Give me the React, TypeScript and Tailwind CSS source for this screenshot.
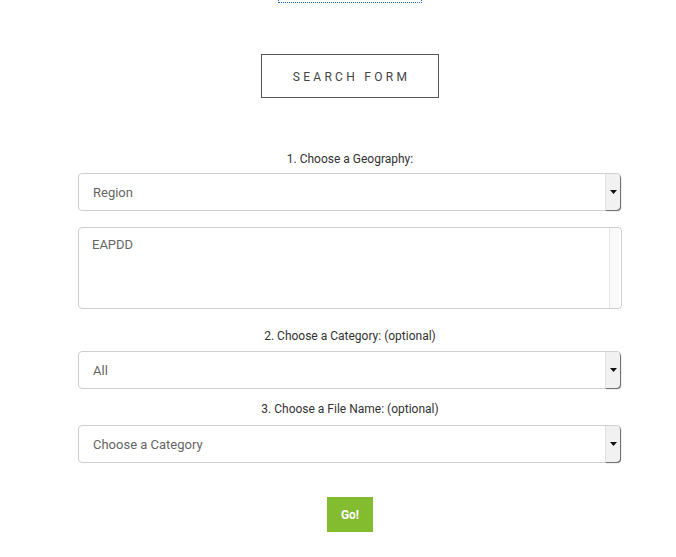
import React from 'react';

const Arrow = () => (
  <div className="absolute right-0 top-0 bottom-0 w-[15px] bg-[#f1f1f1] border-l border-[#e2e2e2] rounded-r-[4px] shadow-[1px_1px_1px_#666] flex items-center justify-center">
    <svg width="7" height="4" viewBox="0 0 7 4">
      <path d="M0 0h7L3.5 4z" fill="#111" />
    </svg>
  </div>
);

const Select = ({ value }: { value: string }) => (
  <div className="relative h-[38px] w-[543px] rounded-[4px] border border-[#cfcfcf] bg-white flex items-center pl-[14px] pt-[2px] text-[13px] text-[#666]">
    {value}
    <Arrow />
  </div>
);

const Label = ({ children }: { children: React.ReactNode }) => (
  <div className="text-center text-[12px] text-[#333] leading-[16px]">{children}</div>
);

export default function App() {
  return (
    <div className="min-h-[557px] bg-white font-['Roboto',sans-serif]">
      <div className="ml-[78px] w-[544px] flex flex-col items-center">
        <div className="w-[144px] h-[3px] border-x border-b border-dotted border-[#1f6fb5] rounded-b-[1px]" />
        <div className="mt-[51px] w-[178px] h-[44px] border border-[#555] flex items-center justify-center pt-[2px] text-[12px] tracking-[3.3px] text-[#444] pl-[3px]">
          SEARCH FORM
        </div>
        <div className="mt-[53px] w-full flex flex-col">
          <Label>1. Choose a Geography:</Label>
          <div className="mt-[6px]">
            <Select value="Region" />
          </div>
          <div className="mt-[16px] relative h-[82px] w-[544px] rounded-[4px] border border-[#cfcfcf] bg-white pl-[13px] pt-[7px] text-[13px] text-[#666]">
            EAPDD
            <div className="absolute right-[2px] top-0 bottom-0 w-[10px] bg-[#fafafa] border-l border-[#e6e6e6]" />
          </div>
          <div className="mt-[19px]">
            <Label>2. Choose a Category: (optional)</Label>
          </div>
          <div className="mt-[7px]">
            <Select value="All" />
          </div>
          <div className="mt-[12px]">
            <Label>3. Choose a File Name: (optional)</Label>
          </div>
          <div className="mt-[8px]">
            <Select value="Choose a Category" />
          </div>
        </div>
        <button className="mt-[34px] w-[46px] h-[35px] bg-[#84bc30] text-white text-[12px] font-bold">
          Go!
        </button>
      </div>
    </div>
  );
}
